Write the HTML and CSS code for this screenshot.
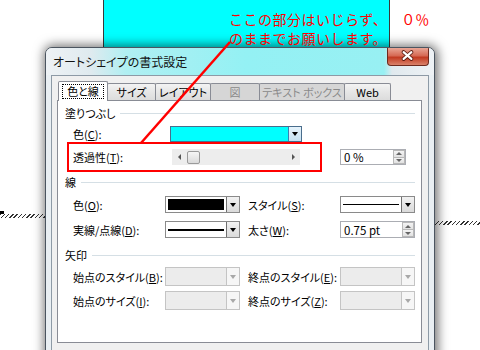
FILE: index.html
```html
<!DOCTYPE html>
<html lang="ja">
<head>
<meta charset="utf-8">
<title>オートシェイプの書式設定</title>
<link rel="stylesheet" href="styles.css">
</head>
<body>
<div class="canvas">
  <div class="doc-shape"></div>
  <div class="tick"></div>
  <div class="hatch hatch-left"></div>
  <div class="hatch hatch-right"></div>

  <div class="window">
    <div class="titlebar">
      <span class="title">オートシェイプの書式設定</span>
      <div class="close">
        <svg width="42" height="18" viewBox="0 0 42 18">
          <path d="M17 5 L25 12 M25 5 L17 12" stroke="#5a1a10" stroke-width="4" stroke-linecap="round"/>
          <path d="M17 5 L25 12 M25 5 L17 12" stroke="#ffffff" stroke-width="2.2" stroke-linecap="round"/>
        </svg>
      </div>
    </div>
    <div class="client">
      <div class="tabs">
        <div class="tab active w50"><span class="focus">色と線</span></div>
        <div class="tab w49">サイズ</div>
        <div class="tab w56">レイアウト</div>
        <div class="tab disabled w50">図</div>
        <div class="tab disabled w86">テキスト ボックス</div>
        <div class="tab w47">Web</div>
      </div>
      <div class="panel">
        <div class="group g1"><span class="gt">塗りつぶし</span><span class="gl"></span></div>
        <div class="row rc">
          <span class="lbl w97">色(<u>C</u>):</span>
          <div class="combo w132 focused">
            <div class="field"><div class="swatch cyan"></div></div>
            <div class="dd hot"><i class="tri"></i></div>
          </div>
        </div>
        <div class="row rt">
          <span class="lbl w99">透過性(<u>T</u>):</span>
          <div class="slider">
            <span class="sarr"><i class="tri-l"></i></span>
            <span class="thumb"></span>
            <span class="strack"></span>
            <span class="sarr"><i class="tri-r"></i></span>
          </div>
          <div class="spin w66 ml40">
            <span class="val">0 %</span>
            <div class="spinbtns"><span><i class="tri-up"></i></span><span><i class="tri-dn"></i></span></div>
          </div>
        </div>

        <div class="group g2"><span class="gt">線</span><span class="gl"></span></div>
        <div class="row ro">
          <span class="lbl w92">色(<u>O</u>):</span>
          <div class="combo w75">
            <div class="field pad"><div class="swatch black"></div></div>
            <div class="dd"><i class="tri"></i></div>
          </div>
          <span class="lbl w92 ml8">スタイル(<u>S</u>):</span>
          <div class="combo w75">
            <div class="field pad"><div class="lineprev thin"></div></div>
            <div class="dd"><i class="tri"></i></div>
          </div>
        </div>
        <div class="row rd">
          <span class="lbl w92">実線/点線(<u>D</u>):</span>
          <div class="combo w75">
            <div class="field pad"><div class="lineprev thick"></div></div>
            <div class="dd"><i class="tri"></i></div>
          </div>
          <span class="lbl w92 ml8">太さ(<u>W</u>):</span>
          <div class="spin w75">
            <span class="val">0.75 pt</span>
            <div class="spinbtns"><span><i class="tri-up"></i></span><span><i class="tri-dn"></i></span></div>
          </div>
        </div>

        <div class="group g3"><span class="gt">矢印</span><span class="gl"></span></div>
        <div class="row rb">
          <span class="lbl w92">始点のスタイル(<u>B</u>):</span>
          <div class="combo w75 disabled"><div class="field"></div><div class="dd"><i class="tri"></i></div></div>
          <span class="lbl w92 ml8">終点のスタイル(<u>E</u>):</span>
          <div class="combo w75 disabled"><div class="field"></div><div class="dd"><i class="tri"></i></div></div>
        </div>
        <div class="row ri">
          <span class="lbl w92">始点のサイズ(<u>I</u>):</span>
          <div class="combo w75 disabled"><div class="field"></div><div class="dd"><i class="tri"></i></div></div>
          <span class="lbl w92 ml8">終点のサイズ(<u>Z</u>):</span>
          <div class="combo w75 disabled"><div class="field"></div><div class="dd"><i class="tri"></i></div></div>
        </div>
      </div>
    </div>
  </div>

  <div class="note"><span>ここの部分はいじらず、</span><span class="pct">０％</span><br>のままでお願いします。</div>
  <div class="note-box"></div>
  <svg class="note-line" width="480" height="350" viewBox="0 0 480 350">
    <line x1="230" y1="42" x2="141" y2="143" stroke="#ff0000" stroke-width="2.5"/>
  </svg>
</div>
</body>
</html>
```

FILE: styles.css
```css
* { box-sizing: border-box; }
html, body { margin: 0; padding: 0; }
body {
  width: 480px; height: 350px; overflow: hidden; background: #fff;
  font-family: "Noto Sans CJK JP", "Noto Sans", sans-serif;
  font-size: 12px; font-feature-settings: "palt"; color: #000;
}
.canvas { position: relative; width: 480px; height: 350px; overflow: hidden; }

/* document behind the dialog */
.doc-shape {
  position: absolute; left: 103px; top: -2px; width: 287px; height: 60px;
  background: #00ffff; border: 1px solid #3a3a3a;
}
.tick { position: absolute; left: 0; top: 211px; width: 4px; height: 3px; background: #000; }
.hatch { position: absolute; height: 4px; background: repeating-linear-gradient(135deg, #333 0 1px, #fff 1px 3px); }
.hatch-left { left: 0; top: 214px; width: 46px; }
.hatch-right { left: 434px; top: 221px; width: 46px; }

/* dialog window */
.window {
  position: absolute; left: 45px; top: 47px; width: 390px; height: 320px;
  display: flex; flex-direction: column;
  background: #e9eff3;
  border: 1px solid #4b5560; border-radius: 7px 7px 0 0;
  box-shadow: 1px 0 11px 2px rgba(0, 0, 0, 0.55);
  overflow: hidden;
}
/* Aero glass title bar tinted by the cyan shape behind it */
.titlebar {
  height: 27px; display: flex; align-items: flex-start; padding: 0 5px;
  background: linear-gradient(90deg, #eef2f5 0, #dfeaef 45px, #b0eff2 80px, #94f1f4 200px, #98f0f3 338px, #e0e9ee 346px, #eef2f5 100%);
}
.title { padding-left: 2px; line-height: 28px; font-size: 12px; color: #111; }
.close {
  margin-left: auto; width: 42px; height: 18px;
  background: linear-gradient(#e9a696, #d66a55 45%, #c23b22 55%, #d9826a);
  border: 1px solid #6d2a1e; border-top: 0; border-radius: 0 0 4px 4px;
  display: flex;
}
.close svg { margin: -1px 0 0 -1px; }

.client {
  flex: 1; background: #f0f0f0; border: 1px solid #8d9aa6; margin: 0 5px;
  padding: 5px 6px 0 5px; display: flex; flex-direction: column;
}

/* tabs */
.tabs { display: flex; align-items: flex-end; height: 19px; padding-left: 1px; font-size: 11px; }
.tab {
  height: 17px; border: 1px solid #898c95; border-bottom: 0; border-radius: 2px 2px 0 0;
  background: linear-gradient(#f3f3f3, #e6e6e6 50%, #dcdcdc);
  display: flex; align-items: center; justify-content: center;
  line-height: 14px; margin-left: -1px; white-space: nowrap;
}
.tab:first-child { margin-left: 0; }
.tab.active {
  height: 20px; margin-bottom: -1px; background: #fff; position: relative; z-index: 2;
}
.tab.disabled { background: #d6d6d6; color: #8a8a8a; }
.focus { outline: 1px dotted #000; padding: 0 4px; line-height: 13px; }
.w47 { width: 47px; } .w49 { width: 49px; } .w50 { width: 50px; }
.w56 { width: 56px; } .w86 { width: 86px; }

/* panel */
.panel {
  position: relative; z-index: 1;
  width: 365px; height: 243px; background: #fff; border: 1px solid #898c95;
  padding: 0 6px 0 7px; font-size: 11px;
}
.group { display: flex; align-items: center; height: 14px; line-height: 14px; }
.gt { white-space: nowrap; }
.gl { flex: 1; height: 1px; background: #d5dfe5; margin-left: 5px; }
.g1 { margin-top: 5px; }
.g2 { margin-top: 10px; }
.g3 { margin-top: 10px; }

.row { display: flex; align-items: center; padding-left: 8px; }
.rc { margin-top: 6px; height: 16px; }
.rt { margin-top: 7px; height: 16px; }
.ro { margin-top: 7px; height: 17px; }
.rd { margin-top: 8px; height: 17px; }
.rb { margin-top: 5px; height: 19px; }
.ri { margin-top: 5px; height: 19px; }

.lbl { white-space: nowrap; line-height: 14px; }
.lbl u { text-decoration-thickness: 1px; text-underline-offset: 1px; }
.w92 { width: 92px; } .w97 { width: 97px; } .w99 { width: 99px; }
.w66 { width: 66px; } .w75 { width: 75px; } .w132 { width: 132px; }
.ml8 { margin-left: 8px; } .ml40 { margin-left: 40px; }

/* combo boxes */
.combo { height: 100%; display: flex; border: 1px solid #8a8a8a; background: #fff; }
.combo .field { flex: 1; display: flex; align-items: center; }
.combo .field.pad { padding: 2px; }
.combo .dd {
  width: 13px; display: flex; align-items: center; justify-content: center;
  border-left: 1px solid #707070; background: linear-gradient(#f2f2f2, #dadada);
}
.combo.focused { border-color: #4a6d8c; }
.combo .dd.hot { background: linear-gradient(#e6f3fb, #c6e1f2); border-left-color: #3c7fb1; }
.tri { width: 0; height: 0; border-left: 3.5px solid transparent; border-right: 3.5px solid transparent; border-top: 4px solid #000; }
.swatch { width: 100%; height: 100%; }
.swatch.cyan { background: #00ffff; }
.swatch.black { background: #000; }
.lineprev { width: 100%; background: #000; }
.lineprev.thin { height: 1px; }
.lineprev.thick { height: 2px; }
.combo.disabled { border-color: #c4c4c4; }
.combo.disabled .field { background: #ececec; }
.combo.disabled .dd { border-left-color: #c4c4c4; background: #f6f6f6; }
.combo.disabled .tri { border-top-color: #a8a8a8; }

/* slider */
.slider { width: 128px; height: 100%; display: flex; align-items: center; background: #ededed; }
.sarr { width: 14px; height: 100%; display: flex; align-items: center; justify-content: center; }
.tri-l { width: 0; height: 0; border-top: 3px solid transparent; border-bottom: 3px solid transparent; border-right: 3px solid #555; }
.tri-r { width: 0; height: 0; border-top: 3px solid transparent; border-bottom: 3px solid transparent; border-left: 3px solid #555; }
.thumb {
  width: 13px; height: 13px; margin-left: 1px;
  border: 1px solid #9a9a9a; border-radius: 2px; background: linear-gradient(#f6f6f6, #dadada);
}
.strack { flex: 1; }

/* spin boxes */
.spin { height: 100%; display: flex; border: 1px solid #abadb3; background: #fff; }
.spin .val { flex: 1; padding-left: 3px; line-height: 14px; display: flex; align-items: center; white-space: nowrap; font-size: 11.5px; }
.spinbtns { width: 12px; display: flex; flex-direction: column; }
.spinbtns span {
  flex: 1; display: flex; align-items: center; justify-content: center;
  border: 1px solid #b8b8b8; background: linear-gradient(#f4f4f4, #e2e2e2);
}
.spinbtns span + span { border-top: 0; }
.tri-up { width: 0; height: 0; border-left: 3px solid transparent; border-right: 3px solid transparent; border-bottom: 3px solid #666; }
.tri-dn { width: 0; height: 0; border-left: 3px solid transparent; border-right: 3px solid transparent; border-top: 3px solid #666; }

/* red annotation */
.note {
  position: absolute; left: 229px; top: 10px; z-index: 5;
  color: #ff0000; font-size: 14px; line-height: 18.5px; letter-spacing: 0.5px;
  font-feature-settings: normal; white-space: nowrap;
}
.note .pct { margin-left: 14px; letter-spacing: 0; }
.note-box {
  position: absolute; left: 67px; top: 142px; width: 255px; height: 30px; z-index: 5;
  border: 2px solid #ff0000;
}
.note-line { position: absolute; left: 0; top: 0; z-index: 6; }
```
